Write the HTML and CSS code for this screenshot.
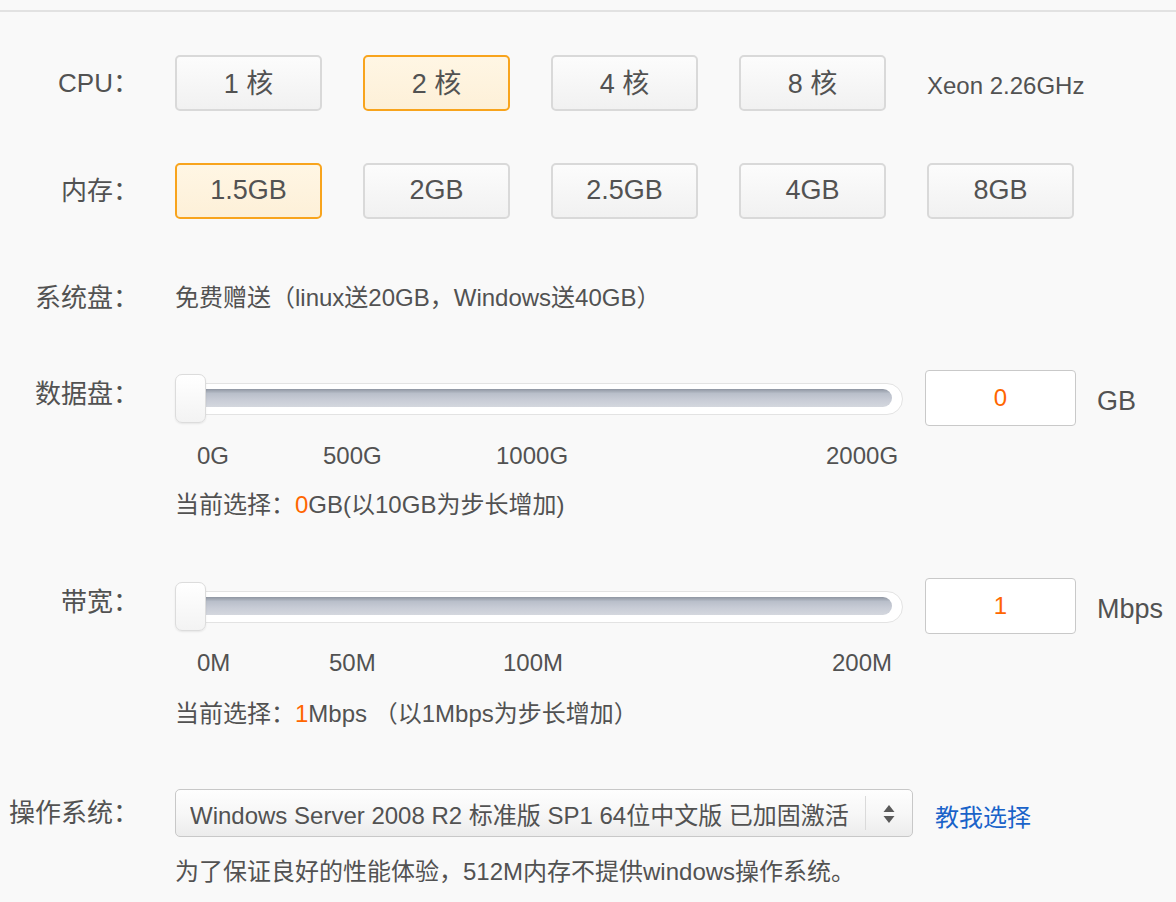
FILE: index.html
```html
<!DOCTYPE html>
<html lang="zh-CN">
<head>
<meta charset="utf-8">
<title>配置选择</title>
<link rel="stylesheet" href="styles.css">
</head>
<body>
<div class="page">
  <div class="row r-cpu">
    <div class="label">CPU：</div>
    <div class="opts opts-cjk">
      <div class="opt">1 核</div>
      <div class="opt on">2 核</div>
      <div class="opt">4 核</div>
      <div class="opt">8 核</div>
    </div>
    <div class="extra">Xeon 2.26GHz</div>
  </div>

  <div class="row r-mem">
    <div class="label">内存：</div>
    <div class="opts">
      <div class="opt on">1.5GB</div>
      <div class="opt">2GB</div>
      <div class="opt">2.5GB</div>
      <div class="opt">4GB</div>
      <div class="opt">8GB</div>
    </div>
  </div>

  <div class="row r-sys">
    <div class="label">系统盘：</div>
    <div class="text">免费赠送（linux送20GB，Windows送40GB）</div>
  </div>

  <div class="row r-disk">
    <div class="label label-up">数据盘：</div>
    <div class="slider">
      <div class="track"><div class="bar"></div></div>
      <div class="handle"></div>
    </div>
    <div class="input">0</div>
    <div class="unit">GB</div>
  </div>
  <div class="row r-ticks1">
    <div class="label"></div>
    <div class="ticks">
      <span class="tick" style="left:22px">0G</span>
      <span class="tick" style="left:148px">500G</span>
      <span class="tick" style="left:321px">1000G</span>
      <span class="tick" style="left:651px">2000G</span>
    </div>
  </div>
  <div class="row r-cur1">
    <div class="label"></div>
    <div class="text">当前选择：<span class="hl">0</span>GB(以10GB为步长增加)</div>
  </div>

  <div class="row r-bw">
    <div class="label label-up">带宽：</div>
    <div class="slider">
      <div class="track"><div class="bar"></div></div>
      <div class="handle"></div>
    </div>
    <div class="input">1</div>
    <div class="unit">Mbps</div>
  </div>
  <div class="row r-ticks2">
    <div class="label"></div>
    <div class="ticks">
      <span class="tick" style="left:22px">0M</span>
      <span class="tick" style="left:154px">50M</span>
      <span class="tick" style="left:328px">100M</span>
      <span class="tick" style="left:657px">200M</span>
    </div>
  </div>
  <div class="row r-cur2">
    <div class="label"></div>
    <div class="text">当前选择：<span class="hl">1</span>Mbps （以1Mbps为步长增加）</div>
  </div>

  <div class="row r-os">
    <div class="label">操作系统：</div>
    <div class="select">
      <div class="val">Windows Server 2008 R2 标准版 SP1 64位中文版 已加固激活</div>
      <div class="sep"></div>
      <div class="arrows">
        <svg width="12" height="20" viewBox="0 0 12 20"><path d="M6 1 L11.5 8 L0.5 8 Z" fill="#5a5a5a"/><path d="M0.5 12 L11.5 12 L6 19 Z" fill="#5a5a5a"/></svg>
      </div>
    </div>
    <a class="link" href="#">教我选择</a>
  </div>
  <div class="row r-note">
    <div class="label"></div>
    <div class="text">为了保证良好的性能体验，512M内存不提供windows操作系统。</div>
  </div>
</div>
</body>
</html>
```

FILE: styles.css
```css
html, body {
  margin: 0;
  padding: 0;
}
body {
  background: #f9f9f9;
  font-family: "Liberation Sans", "Noto Sans CJK SC", sans-serif;
  color: #525252;
}
.page {
  margin-top: 10px;
  border-top: 2px solid #e2e2e2;
  padding-top: 43px;
  display: flex;
  flex-direction: column;
}
.row {
  display: flex;
  align-items: center;
}
.label {
  width: 139px;
  flex: none;
  margin-right: 36px;
  text-align: right;
  font-size: 26px;
  line-height: 30px;
  color: #525252;
  white-space: nowrap;
}
.label-up {
  margin-top: -9px;
}
.text {
  font-size: 24px;
  line-height: 30px;
  white-space: nowrap;
}
.hl {
  color: #ff6600;
}
.opts {
  display: flex;
  gap: 41px;
}
.opt {
  width: 147px;
  height: 56px;
  box-sizing: border-box;
  border: 2px solid #d9d9d9;
  border-radius: 5px;
  background: linear-gradient(#fcfcfc, #f1f1f1);
  font-size: 27px;
  color: #525252;
  display: flex;
  align-items: center;
  justify-content: center;
}
.opts-cjk .opt {
  padding-bottom: 3px;
}
.opt.on {
  border-color: #f8a41d;
  background: linear-gradient(#fff6e4, #fdf0d8);
}
.extra {
  margin-left: 41px;
  margin-top: 6px;
  font-size: 24px;
}
.r-cpu { height: 56px; }
.r-mem { margin-top: 51px; height: 57px; }
.r-sys { margin-top: 64px; height: 30px; }
.r-disk { margin-top: 57px; height: 56px; }
.r-ticks1 { margin-top: 15px; height: 30px; }
.r-cur1 { margin-top: 19px; height: 30px; }
.r-bw { margin-top: 58px; height: 56px; }
.r-ticks2 { margin-top: 14px; height: 30px; }
.r-cur2 { margin-top: 21px; height: 30px; }
.r-os { margin-top: 60px; height: 48px; }
.r-note { margin-top: 20px; height: 30px; }

.slider {
  position: relative;
  width: 728px;
  height: 56px;
  display: flex;
  align-items: center;
  flex: none;
}
.track {
  flex: 1;
  height: 32px;
  margin-top: 2px;
  box-sizing: border-box;
  border: 1px solid #e3e3e3;
  border-radius: 16px;
  background: #fff;
  padding: 5px 10px 7px 6px;
}
.bar {
  height: 18px;
  border-radius: 9px;
  background: linear-gradient(#8f96a2, #b9bfca 25%, #c8ccd6 60%, #d4d7de);
}
.handle {
  position: absolute;
  left: 0;
  top: 4px;
  width: 31px;
  height: 49px;
  box-sizing: border-box;
  border: 1px solid #dcdcdc;
  border-radius: 7px;
  background: linear-gradient(#ffffff, #f3f3f3);
  box-shadow: 0 1px 2px rgba(0,0,0,0.08);
}
.input {
  margin-left: 22px;
  width: 151px;
  height: 56px;
  box-sizing: border-box;
  border: 1px solid #c9c9c9;
  border-radius: 4px;
  background: #fff;
  color: #ff6600;
  font-size: 24px;
  display: flex;
  align-items: center;
  justify-content: center;
  flex: none;
}
.unit {
  margin-left: 21px;
  margin-top: 6px;
  font-size: 27px;
  color: #525252;
}
.ticks {
  position: relative;
  width: 728px;
  height: 30px;
}
.tick {
  position: absolute;
  top: 0;
  font-size: 24px;
  line-height: 30px;
  white-space: nowrap;
}
.select {
  width: 738px;
  height: 48px;
  box-sizing: border-box;
  border: 1px solid #c8c8c8;
  border-radius: 5px;
  background: linear-gradient(#fefefe, #f7f7f7 50%, #ececec);
  display: flex;
  align-items: center;
  padding-left: 14px;
  font-size: 24px;
  color: #525252;
  flex: none;
}
.select .val {
  flex: 1;
  white-space: nowrap;
  overflow: hidden;
}
.select .sep {
  width: 1px;
  height: 34px;
  background: #dadada;
}
.select .arrows {
  width: 46px;
  display: flex;
  justify-content: center;
  align-items: center;
  padding-top: 2px;
}
.select .arrows svg {
  display: block;
}
.link {
  margin-left: 22px;
  margin-top: 4px;
  font-size: 24px;
  color: #1a63c9;
  text-decoration: none;
}
```
